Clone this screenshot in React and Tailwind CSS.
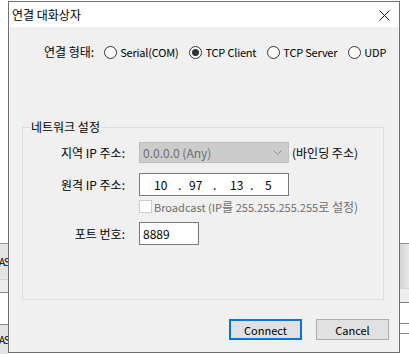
import React from 'react';

const font = { fontFamily: '"Noto Sans CJK KR", "Noto Sans", sans-serif' };

const Radio = ({ label, checked }) => (
    <div className="flex items-center gap-[3px] whitespace-nowrap">
        <span className="w-[13px] h-[13px] rounded-full border border-[#333333] bg-white flex items-center justify-center shrink-0">
            {checked && <span className="w-[7px] h-[7px] rounded-full bg-[#333333]" />}
        </span>
        <span className="text-[11px] tracking-[-0.2px]">{label}</span>
    </div>
);

const LeftStrip = () => (
    <div className="w-[8px] h-full flex flex-col overflow-hidden shrink-0">
        <div className="h-[243px] bg-white" />
        <div className="h-[36px] border-t border-[#9a9a9a] bg-[#e4e4e4] flex items-center">
            <span className="-ml-[1px] text-[10px] tracking-[-1px] leading-4 whitespace-nowrap">AS</span>
        </div>
        <div className="h-[13px] border-t border-[#d4d4d4] bg-[#ececec]" />
        <div className="h-[32px] border-t border-[#8a8a8a] bg-white" />
        <div className="flex-1 border-t border-[#8a8a8a] bg-[#e4e4e4] flex items-center">
            <span className="-ml-[1px] text-[10px] tracking-[-1px] leading-4 whitespace-nowrap">AS</span>
        </div>
    </div>
);

const RightStrip = () => (
    <div className="w-[9px] h-full flex flex-col overflow-hidden shrink-0">
        <div className="h-[243px] bg-white" />
        <div className="h-[45px] border-t border-[#8f8f8f] bg-gradient-to-r from-[#d4d4d4] to-[#e8e8e8]" />
        <div className="h-[14px] border-t border-[#d6d6d6] bg-[#ededed]" />
        <div className="h-[21px] border-t border-[#7f7f7f] bg-white" />
        <div className="h-[10px] border-t border-[#8a8a8a] bg-white" />
        <div className="flex-1 border-t border-[#8a8a8a] bg-white" />
    </div>
);

export default function App() {
    return (
        <div className="w-[409px] h-[354px] flex bg-white text-black text-[12px] overflow-hidden whitespace-nowrap" style={font}>
            <LeftStrip />

            <div className="w-[392px] h-[352px] mt-px border border-[#707070] flex flex-col shrink-0">
                {/* Title bar */}
                <div className="h-[25px] bg-white flex items-center justify-between pl-[3px] pr-[8px]">
                    <span className="text-[12px] leading-4 pt-[1px]">연결 대화상자</span>
                    <svg width="11" height="11" viewBox="0 0 11 11" className="mr-[1px] mt-[2px]">
                        <path d="M0.5 0.5 L10.5 10.5 M10.5 0.5 L0.5 10.5" stroke="#111" strokeWidth="1" fill="none" />
                    </svg>
                </div>

                {/* Body */}
                <div className="flex-1 bg-[#f0f0f0] flex flex-col pt-[17px]">
                    <div className="flex items-center h-[16px] pl-[35px] leading-4">
                        <span className="mr-[10px]">연결 형태:</span>
                        <div className="flex items-center gap-[11px]">
                            <Radio label="Serial(COM)" />
                            <Radio label="TCP Client" checked />
                            <Radio label="TCP Server" />
                            <Radio label="UDP" />
                        </div>
                    </div>

                    <fieldset className="ml-[13px] mt-[59px] w-[362px] h-[181px] border border-[#dcdcdc] px-0 pt-[7px] pb-0">
                        <legend className="ml-[7px] px-[1px] leading-4 text-[12px]">네트워크 설정</legend>

                        <div className="flex flex-col">
                            <div className="flex items-center h-[21px]">
                                <span className="w-[102px] text-right leading-4">지역 IP 주소:</span>
                                <div className="ml-[14px] w-[150px] h-[21px] bg-[#cccccc] border border-[#bfbfbf] flex items-center justify-between pl-[3px] pr-[6px] text-[#6d6d6d]">
                                    <span className="leading-4">0.0.0.0 (Any)</span>
                                    <svg width="9" height="5" viewBox="0 0 9 5">
                                        <path d="M0.5 0.5 L4.5 4.5 L8.5 0.5" stroke="#8a8a8a" strokeWidth="1" fill="none" />
                                    </svg>
                                </div>
                                <span className="ml-[3px] leading-4">(바인딩 주소)</span>
                            </div>

                            <div className="flex items-center h-[23px] mt-[10px]">
                                <span className="w-[102px] text-right leading-4">원격 IP 주소:</span>
                                <div className="ml-[14px] w-[150px] h-[23px] bg-white border border-[#7a7a7a] flex items-center pl-[14px] leading-4">
                                    <span className="w-[24px]">10</span>
                                    <span className="w-[11px]">.</span>
                                    <span className="w-[24px]">97</span>
                                    <span className="w-[17px]">.</span>
                                    <span className="w-[20px]">13</span>
                                    <span className="w-[15px]">.</span>
                                    <span>5</span>
                                </div>
                            </div>

                            <div className="flex items-center h-[13px] mt-[4px] pl-[116px]">
                                <span className="w-[13px] h-[13px] border border-[#cccccc] bg-white" />
                                <span className="ml-[2px] leading-4 text-[#6d6d6d]">
                                    <span className="text-[11px]">Broadcast (IP</span>를 <span className="text-[11px]">255.255.255.255</span>로 설정)
                                </span>
                            </div>

                            <div className="flex items-center h-[23px] mt-[9px]">
                                <span className="w-[102px] text-right leading-4">포트 번호:</span>
                                <div className="ml-[14px] w-[60px] h-[23px] bg-white border border-[#7a7a7a] flex items-center pl-[3px] leading-4">
                                    8889
                                </div>
                            </div>
                        </div>
                    </fieldset>

                    <div className="flex justify-end gap-[14px] pr-[10px] mt-[19px]">
                        <button className="w-[73px] h-[21px] bg-[#e1e1e1] border-2 border-[#0078d7] leading-4 text-[11px]">
                            Connect
                        </button>
                        <button className="w-[73px] h-[21px] bg-[#e1e1e1] border border-[#adadad] leading-4 text-[11px]">
                            Cancel
                        </button>
                    </div>
                </div>
            </div>

            <RightStrip />
        </div>
    );
}
